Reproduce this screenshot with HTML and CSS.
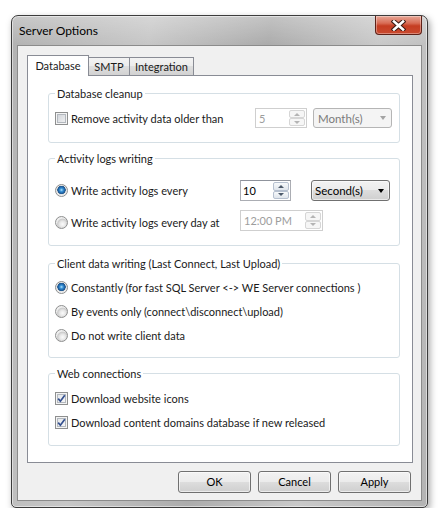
FILE: index.html
```html
<!DOCTYPE html>
<html>
<head>
<meta charset="utf-8">
<title>Server Options</title>
<link rel="stylesheet" href="styles.css">
</head>
<body>
<div class="window">
  <div class="titlebar">
    <span class="title">Server Options</span>
    <div class="close">
      <svg width="15" height="11" viewBox="0 0 15 11">
        <path d="M3 1.5 L12 9.5 M12 1.5 L3 9.5" stroke="#3a1a14" stroke-width="4.6" stroke-linecap="square" fill="none"/>
        <path d="M3 1.5 L12 9.5 M12 1.5 L3 9.5" stroke="#ffffff" stroke-width="2.6" stroke-linecap="square" fill="none"/>
      </svg>
    </div>
  </div>
  <div class="client">
    <div class="tabs">
      <div class="tab active">Database</div>
      <div class="tab smtp">SMTP</div>
      <div class="tab integ">Integration</div>
    </div>
    <div class="pane">
      <fieldset class="group g1">
        <legend>Database cleanup</legend>
        <div class="row r20">
          <div class="opt w200"><span class="check"></span><span>Remove activity data older than</span></div>
          <div class="spin disabled w52"><span class="val">5</span><span class="arrows"><span class="sbtn up"></span><span class="sbtn down"></span></span></div>
          <div class="combo disabled w79 ml6"><span class="ctext">Month(s)</span><span class="carrow"></span></div>
        </div>
      </fieldset>

      <fieldset class="group g2">
        <legend>Activity logs writing</legend>
        <div class="row r21">
          <div class="opt w185"><span class="radio on"></span><span>Write activity logs every</span></div>
          <div class="spin w51"><span class="val">10</span><span class="arrows"><span class="sbtn up"></span><span class="sbtn down"></span></span></div>
          <div class="combo w79 ml20"><span class="ctext">Second(s)</span><span class="carrow"></span></div>
        </div>
        <div class="row r21 gap9">
          <div class="opt w185 shift"><span class="radio"></span><span>Write activity logs every day at</span></div>
          <div class="spin disabled w83"><span class="val">12:00 PM</span><span class="arrows"><span class="sbtn up"></span><span class="sbtn down"></span></span></div>
        </div>
      </fieldset>

      <fieldset class="group g3">
        <legend>Client data writing (Last Connect, Last Upload)</legend>
        <div class="row r15"><div class="opt"><span class="radio on"></span><span>Constantly (for fast SQL Server &lt;-&gt; WE Server connections )</span></div></div>
        <div class="row r15 gap9"><div class="opt"><span class="radio"></span><span>By events only (connect\disconnect\upload)</span></div></div>
        <div class="row r15 gap9"><div class="opt"><span class="radio"></span><span>Do not write client data</span></div></div>
      </fieldset>

      <fieldset class="group g4">
        <legend>Web connections</legend>
        <div class="row r15"><div class="opt"><span class="check on"><svg width="9" height="9" viewBox="0 0 9 9"><path d="M1.2 4.6 L3.4 7.2 L7.8 1.2" stroke="#34508f" stroke-width="1.7" fill="none"/></svg></span><span>Download website icons</span></div></div>
        <div class="row r15 gap9"><div class="opt"><span class="check on"><svg width="9" height="9" viewBox="0 0 9 9"><path d="M1.2 4.6 L3.4 7.2 L7.8 1.2" stroke="#34508f" stroke-width="1.7" fill="none"/></svg></span><span>Download content domains database if new released</span></div></div>
      </fieldset>
    </div>
    <div class="buttons">
      <div class="button">OK</div>
      <div class="button">Cancel</div>
      <div class="button">Apply</div>
    </div>
  </div>
</div>
</body>
</html>
```
FILE: styles.css
```css
body {
  margin: 0;
  background: #ffffff;
  font-family: Lato, "Noto Sans", sans-serif;
  font-size: 11px;
  color: #1a1a1a;
}

.window {
  margin: 15px 0 0 11px;
  width: 417px;
  height: 493px;
  box-sizing: border-box;
  border: 1px solid #3c3c3c;
  border-radius: 7px 7px 5px 5px;
  padding: 0 5px 6px 5px;
  display: flex;
  flex-direction: column;
  background:
    linear-gradient(to bottom, rgba(255,255,255,0.28), rgba(255,255,255,0) 28px),
    linear-gradient(100deg, #b2b2b2 0%, #c7c7c7 28%, #acacac 52%, #c9c9c9 74%, #b3b3b3 100%);
  box-shadow: 2px 3px 7px rgba(0,0,0,0.35), inset 0 0 0 1px rgba(255,255,255,0.5);
}

.titlebar {
  height: 29px;
  display: flex;
  justify-content: space-between;
  align-items: flex-start;
}

.title {
  margin: 7px 0 0 2px;
  line-height: 16px;
  font-size: 12px;
  color: #000;
}

.close {
  width: 47px;
  height: 19px;
  box-sizing: border-box;
  border: 1px solid #5e2118;
  border-top: none;
  border-radius: 0 0 4px 4px;
  background: linear-gradient(#e7a797 0%, #d86c55 40%, #c53d22 55%, #c94a2f 100%);
  box-shadow: inset 0 0 0 1px rgba(255,255,255,0.35);
  display: flex;
  align-items: center;
  justify-content: center;
}

.client {
  flex: 1;
  background: #f0f0f0;
  border: 1px solid #8b8b8b;
  padding: 9px 8px 7px 9px;
  display: flex;
  flex-direction: column;
}

.tabs {
  height: 20px;
  display: flex;
  align-items: flex-end;
}

.tab {
  height: 18px;
  box-sizing: border-box;
  border: 1px solid #898c95;
  border-bottom: none;
  border-left: none;
  background: linear-gradient(#f3f3f3, #ebebeb 50%, #dedede 50%, #d2d2d2);
  text-align: center;
  line-height: 17px;
}

.tab.active {
  position: relative;
  height: 21px;
  margin-bottom: -1px;
  width: 62px;
  border-left: 1px solid #898c95;
  background: #ffffff;
  line-height: 20px;
}

.tab.smtp { width: 41px; }
.tab.integ { width: 64px; }

.pane {
  flex: 1;
  border: 1px solid #898c95;
  background: #ffffff;
  padding: 10px 12px 0 20px;
}

.group {
  margin: 0;
  border: 1px solid #d5dfe5;
  border-radius: 3px;
  padding: 0 6px;
  min-width: 0;
}

.group legend {
  padding: 0 2px;
  line-height: 15px;
  color: #1a1a1a;
}

.g1 { padding-top: 7px; padding-bottom: 14px; }
.g2 { margin-top: 8px; padding-top: 14px; padding-bottom: 14px; }
.g3 { margin-top: 10px; padding-top: 9px; padding-bottom: 14px; }
.g4 { margin-top: 8px; padding-top: 10px; padding-bottom: 15px; }

.row {
  display: flex;
  align-items: center;
}
.r20 { height: 20px; }
.r21 { height: 21px; }
.r15 { height: 15px; }
.gap9 { margin-top: 9px; }

.opt {
  display: flex;
  align-items: center;
  gap: 3px;
  white-space: nowrap;
}
.opt.shift { margin-top: 3px; }
.w200 { width: 200px; }
.w185 { width: 185px; }
.w52 { width: 52px; }
.w51 { width: 51px; }
.w83 { width: 83px; }
.w79 { width: 79px; }
.ml6 { margin-left: 6px; }
.ml20 { margin-left: 20px; }

.check {
  width: 13px;
  height: 13px;
  box-sizing: border-box;
  border: 1px solid #8e8f8f;
  background: linear-gradient(135deg, #cbcfd5, #f6f6f6);
  box-shadow: inset 0 0 0 1px #f4f4f4, inset 0 0 0 2px #b3b8be;
  display: flex;
  align-items: center;
  justify-content: center;
  flex: none;
}
.check.on {
  background: linear-gradient(135deg, #dfe2e6, #fafafa);
}

.radio {
  width: 13px;
  height: 13px;
  box-sizing: border-box;
  border-radius: 50%;
  border: 1px solid #8e8f8f;
  background: radial-gradient(circle at 60% 65%, #fbfbfb 0, #e6e6e6 3px, #cbcbcb 5px, #eeeeee 6px);
  flex: none;
}
.radio.on {
  background: radial-gradient(circle at 50% 45%, #b9e4fb 0, #3b95d9 1.6px, #1c5c9c 3.4px, #2f5f8f 4px, #e2e2e2 4.4px, #f2f2f2 6px);
}

.spin {
  height: 100%;
  box-sizing: border-box;
  border: 1px solid #abadb3;
  border-top-color: #8f939c;
  background: #ffffff;
  display: flex;
}
.spin .val {
  flex: 1;
  padding-left: 2px;
  line-height: 19px;
  color: #000;
}
.spin .arrows {
  width: 16px;
  display: flex;
  flex-direction: column;
  padding: 1px 1px 1px 0;
}
.sbtn {
  flex: 1;
  box-sizing: border-box;
  border: 1px solid #b6c0cf;
  border-radius: 2px;
  background: linear-gradient(#f7f9fb, #dfe5ec);
  display: flex;
  align-items: center;
  justify-content: center;
}
.sbtn.up::after {
  content: "";
  border-left: 3px solid transparent;
  border-right: 3px solid transparent;
  border-bottom: 3px solid #4d5a6b;
}
.sbtn.down::after {
  content: "";
  border-left: 3px solid transparent;
  border-right: 3px solid transparent;
  border-top: 3px solid #4d5a6b;
}
.spin.disabled {
  border-color: #cfcfcf;
}
.spin.disabled .val {
  color: #9d9d9d;
  padding-left: 3px;
}
.spin.disabled .sbtn {
  border-color: #d6d6d6;
  background: #f6f6f6;
}
.spin.disabled .sbtn.up::after { border-bottom-color: #b4b4b4; }
.spin.disabled .sbtn.down::after { border-top-color: #b4b4b4; }

.combo {
  height: 100%;
  box-sizing: border-box;
  border: 1px solid #707070;
  border-radius: 3px;
  background: linear-gradient(#f2f2f2, #ebebeb 50%, #dddddd 50%, #cfcfcf);
  box-shadow: inset 0 0 0 1px rgba(255,255,255,0.55);
  display: flex;
  align-items: center;
  padding: 0 5px 0 3px;
  font-size: 11.5px;
}
.combo .ctext {
  flex: 1;
  color: #000;
}
.combo .carrow {
  border-left: 3.5px solid transparent;
  border-right: 3.5px solid transparent;
  border-top: 4px solid #000;
}
.combo.disabled {
  border-color: #b5b5b5;
  background: #f4f4f4;
  box-shadow: none;
  padding-left: 4px;
}
.combo.disabled .ctext { color: #7a7a7a; }
.combo.disabled .carrow { border-top-color: #a3a3a3; }

.buttons {
  height: 22px;
  margin-top: 8px;
  padding-right: 2px;
  display: flex;
  justify-content: flex-end;
  gap: 7px;
}
.button {
  width: 73px;
  box-sizing: border-box;
  border: 1px solid #707070;
  border-radius: 3px;
  background: linear-gradient(#f2f2f2, #ebebeb 50%, #dddddd 50%, #cfcfcf);
  box-shadow: inset 0 0 0 1px rgba(255,255,255,0.6);
  text-align: center;
  line-height: 20px;
  color: #000;
}
```
